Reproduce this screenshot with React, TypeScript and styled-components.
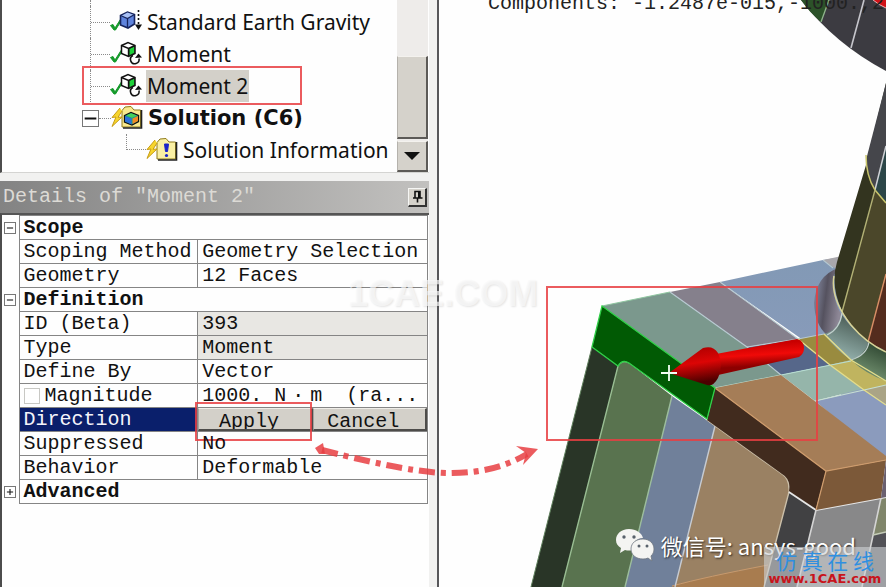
import React from "react";
import styled, { createGlobalStyle } from "styled-components";

const GlobalStyle = createGlobalStyle`
  * { box-sizing: border-box; }
  body { margin: 0; background: #fff; color: #111; }
  button, input { font: inherit; color: inherit; }
`;

const mono = `"Liberation Mono", "Noto Sans CJK SC", monospace`;
const markRed = "rgba(232, 62, 66, 0.85)";

const Shell = styled.main`
  position: relative;
  display: grid;
  grid-template-columns: minmax(0, 439fr) minmax(0, 447fr);
  min-height: 100vh;
  overflow: hidden;
`;

const SidePane = styled.section`
  display: flex;
  flex-direction: column;
  padding-right: 8px;
  background: #f1f1f0;
  border-right: 2px solid #57575a;
`;

const Outline = styled.div`
  display: flex;
  height: 173px;
  background: #fefefe;
  border-left: 2px solid #4c4c4c;
  border-bottom: 1px solid #d4d4d2;
`;

const Tree = styled.ul`
  flex: 1;
  min-width: 0;
  margin: 0;
  padding: 0;
  list-style: none;
  font: 21px/32px "Noto Sans", sans-serif;

  &::before {
    content: "";
    display: block;
    height: 6px;
    margin-left: 88px;
    border-left: 1px dotted #8a8a8a;
  }
`;

const TreeRow = styled.li<{ $indent: number }>`
  position: relative;
  display: flex;
  align-items: center;
  height: 32px;
  padding-left: ${(p) => p.$indent}px;
  white-space: nowrap;
`;

const Connector = styled.span<{ $last?: boolean }>`
  display: flex;
  align-items: center;
  align-self: flex-start;
  width: 20px;
  height: ${(p) => (p.$last ? "50%" : "100%")};
  border-left: 1px dotted #8a8a8a;
  border-bottom: ${(p) => (p.$last ? "1px dotted #8a8a8a" : "none")};

  &::after {
    content: "";
    flex: 1;
    border-top: ${(p) => (p.$last ? "none" : "1px dotted #8a8a8a")};
  }
`;

const ShortDots = styled.span`
  width: 12px;
  border-top: 1px dotted #8a8a8a;
`;

const Toggle = styled.button<{ $size: number }>`
  display: grid;
  place-items: center;
  flex: none;
  width: ${(p) => p.$size}px;
  height: ${(p) => p.$size}px;
  padding: 0;
  background: #fff;
  border: 1px solid #777;
`;

const NodeLabel = styled.button<{ $selected?: boolean; $bold?: boolean }>`
  height: 32px;
  margin-left: 4px;
  padding: 0 1px;
  border: 0;
  background: ${(p) => (p.$selected ? "#d3d0c9" : "transparent")};
  font-family: ${(p) => (p.$bold ? `"DejaVu Sans"` : `"Noto Sans"`)}, sans-serif;
  font-weight: ${(p) => (p.$bold ? 700 : 400)};
  line-height: 32px;
`;

const RowMark = styled.span`
  position: absolute;
  left: 80px;
  top: -4px;
  width: 220px;
  height: 39px;
  border: 2px solid ${markRed};
  pointer-events: none;
`;

const ScrollTrack = styled.div`
  display: flex;
  flex-direction: column;
  width: 31px;
  margin-right: 1px;
  background: #eeecea;
`;

const ScrollThumb = styled.div`
  height: 83px;
  margin-top: auto;
  background: #d5d2cb;
  border: solid;
  border-width: 1px 2px 2px 1px;
  border-color: #f4f2ee #5c5a57 #5c5a57 #b5b2ac;
`;

const ScrollButton = styled.button`
  display: grid;
  place-items: center;
  height: 31px;
  margin-top: 2px;
  padding: 0;
  background: #d5d2cb;
  border: solid;
  border-width: 1px 2px 2px 1px;
  border-color: #f4f2ee #5c5a57 #5c5a57 #b5b2ac;
`;

const TitleBar = styled.header`
  display: flex;
  align-items: center;
  justify-content: space-between;
  height: 32px;
  margin-top: 8px;
  padding: 0 2px 0 3px;
  background: linear-gradient(90deg, #838383, #c2c1bf);
  font: 20px/32px ${mono};
  color: #dcdad5;
`;

const Title = styled.h2`
  margin: 0;
  font: inherit;
  white-space: pre;
`;

const PinButton = styled.button`
  display: grid;
  place-items: center;
  width: 19px;
  height: 19px;
  padding: 0;
  background: #d5d2cb;
  border: solid;
  border-width: 1px 2px 2px 1px;
  border-color: #f6f6f4 #333 #333 #f6f6f4;
`;

const Details = styled.div`
  flex: 1;
  padding-right: 1px;
  background: #fefefe;
  border-left: 2px solid #4c4c4c;
  border-top: 2px solid #555;
`;

const Grid = styled.table`
  width: 100%;
  table-layout: fixed;
  border-collapse: collapse;
  font: 20px/23px ${mono};
`;

const Gutter = styled.td`
  padding: 0 0 0 2px;
`;

const GroupCell = styled.th`
  height: 24px;
  padding: 0 0 0 4px;
  border: 1px solid #858585;
  text-align: left;
  font-weight: 700;
`;

const NameCell = styled.th<{ $active?: boolean }>`
  height: 24px;
  padding: 0 0 0 4px;
  border: 1px solid #858585;
  background: ${(p) => (p.$active ? "#0a1f6b" : "transparent")};
  color: ${(p) => (p.$active ? "#f4f4fa" : "inherit")};
  text-align: left;
  font-weight: 400;
  white-space: nowrap;
`;

const ValueCell = styled.td<{ $readOnly?: boolean; $flush?: boolean }>`
  position: relative;
  padding: 0 0 0 ${(p) => (p.$flush ? 0 : 4)}px;
  border: 1px solid #858585;
  background: ${(p) => (p.$readOnly ? "#e8e7e3" : "transparent")};
  white-space: pre;
`;

const WideDot = styled.span`
  display: inline-block;
  width: 24px;
  text-align: center;
`;

const CheckLabel = styled.label`
  display: flex;
  align-items: center;
  gap: 5px;
`;

const Check = styled.input`
  appearance: none;
  width: 16px;
  height: 16px;
  margin: 0;
  background: #fff;
  border: 1px solid #c8c8c4;
`;

const ButtonPair = styled.div`
  display: grid;
  grid-template-columns: 1fr 1fr;
  height: 23px;
`;

const CellButton = styled.button`
  height: 23px;
  padding: 3px 12px 0 0;
  overflow: hidden;
  background: #d3d0c9;
  border: solid;
  border-width: 1px 2px 2px 1px;
  border-color: #efede8 #4d4c4a #4d4c4a #a5a39e;
  line-height: 20px;
`;

const ApplyMark = styled.span`
  position: absolute;
  left: -3px;
  top: -6px;
  width: 117px;
  height: 39px;
  border: 2px solid ${markRed};
  pointer-events: none;
`;

const Viewer = styled.section`
  position: relative;
  overflow: hidden;
  background: #fefefe;
`;

const Scene = styled.svg`
  position: absolute;
  inset: 0;
  width: 100%;
  height: 100%;
`;

const Readout = styled.p`
  position: absolute;
  left: 49px;
  top: -8px;
  margin: 0;
  font: 20px/24px ${mono};
  white-space: pre;
  color: #222;
`;

const LinkArrow = styled.svg`
  position: absolute;
  left: 310px;
  top: 436px;
  width: 240px;
  height: 50px;
  pointer-events: none;
`;

const CenterMark = styled.span`
  position: absolute;
  left: 348px;
  top: 274px;
  font: 700 36px/40px "Liberation Sans", sans-serif;
  color: rgba(250, 250, 250, 0.7);
  text-shadow: 1px 1px 2px rgba(0, 0, 0, 0.1);
  pointer-events: none;
`;

const Account = styled.div`
  position: absolute;
  right: 30px;
  bottom: 25px;
  display: flex;
  align-items: center;
  gap: 6px;
  font: 22px/34px "Noto Sans CJK SC", sans-serif;
  color: #fff;
  text-shadow: 1px 1px 2px rgba(0, 0, 0, 0.7);
  white-space: nowrap;
`;

const SiteBadge = styled.div`
  position: absolute;
  right: 0;
  bottom: 0;
  width: 122px;
  height: 40px;
  background: rgba(205, 208, 212, 0.62);
  text-align: center;
  white-space: nowrap;
`;

const SiteName = styled.div`
  font: 21px/26px "Noto Sans CJK SC", sans-serif;
  color: #2f8fe0;
`;

const SiteLink = styled.a`
  display: block;
  font: 700 13px/12px "DejaVu Sans", sans-serif;
  color: #c8141c;
  text-decoration: none;
`;

const Tick = () => (
  <path d="M0.5 19.5 3 18.5 5 22 11 12.5 12 13.5 5.5 24 4 24Z" fill="#159a2b" stroke="#159a2b" />
);

const GravityIcon = () => (
  <svg width="32" height="32" aria-hidden="true">
    <Tick />
    <path d="M10.5 9.5 17.5 6 24.5 8.5V18L18 22 10.5 19Z" fill="#5f84dd" stroke="#16245c" strokeWidth="1.6" />
    <path d="M11 10 17.5 12.5 24 9 17.5 6.5Z" fill="#a9c1f5" />
    <path d="M10.5 9.5 17.5 12.5 24.5 8.5M17.5 12.5V21.5" fill="none" stroke="#16245c" strokeWidth="1.3" />
    <path d="M28.5 4V19" stroke="#111" strokeWidth="1.6" strokeDasharray="2 2" />
    <path d="M25 18.5H32L28.5 24Z" fill="#111" />
  </svg>
);

const MomentIcon = () => (
  <svg width="32" height="32" aria-hidden="true">
    <Tick />
    <path d="M11.5 7.5 18 4.5 25 7.5V15.5L18.5 18.5 11.5 15.5Z" fill="#fff" stroke="#111" strokeWidth="1.5" />
    <path d="M19 10.5 24.5 8V15L19 17.8Z" fill="#1ed13a" stroke="#111" strokeWidth="0.8" />
    <path d="M11.5 7.5 18.5 10.5 25 7.5M18.5 10.5V18" fill="none" stroke="#111" strokeWidth="1.4" />
    <path d="M23 17.5A4.3 4.3 0 1 0 29 20.5" fill="none" stroke="#111" strokeWidth="1.6" />
    <path d="M25 20 28.5 15.5 32 19.5Z" fill="#111" />
  </svg>
);

const Bolt = () => (
  <path d="M9 6 1 15.5 5 15 1 24.5 11 15 7 15.3 11 9" fill="#f7d52c" stroke="#c79c14" strokeWidth="1" />
);

const SolutionIcon = () => (
  <svg width="32" height="32" aria-hidden="true">
    <path d="M11 8.5 14 5 20 4.5 23 8H29.5V25H11Z" fill="#f9e98e" stroke="#8f7a1a" />
    <path d="M30.5 8V26H12" fill="none" stroke="#222" strokeWidth="1.6" />
    <path d="M13.5 13.5 20 10.5 27.5 13.5V19.5L21 23 13.5 20Z" fill="#1f9a86" stroke="#111" strokeWidth="1.3" />
    <path d="M14 14 20.5 16.5V22.5L14 19.5Z" fill="#2b6fdc" />
    <path d="M21.5 16.5 27 14V19L21.5 22Z" fill="#f08a24" />
    <path d="M15 13.5 20 11.3 26 13.5 21 15.8Z" fill="#45d15a" />
    <Bolt />
  </svg>
);

const InfoIcon = () => (
  <svg width="32" height="32" aria-hidden="true">
    <path d="M11 8.5 14 5 20 4.5 23 8H29.5V25H11Z" fill="#faf0a4" stroke="#8f7a1a" />
    <path d="M30.5 8V26H12" fill="none" stroke="#222" strokeWidth="1.6" />
    <path d="M18.5 10H22.5L21.5 17.5H19.5Z" fill="#1a24c8" stroke="#1a24c8" />
    <circle cx="20.5" cy="21.5" r="1.6" fill="#1a24c8" />
    <Bolt />
  </svg>
);

const Sign = ({ size, plus }: { size: number; plus?: boolean }) => (
  <svg width={size} height={size} viewBox="0 0 9 9" aria-hidden="true">
    <path d={plus ? "M1 4.5H8M4.5 1V8" : "M1 4.5H8"} stroke="#111" strokeWidth="1.2" />
  </svg>
);

const Model = () => (
  <Scene viewBox="439 0 447 587" preserveAspectRatio="xMinYMin slice" role="img" aria-label="Bracket geometry with moment direction">
    <defs>
      <linearGradient id="fillet" x1="0" x2="1" y1="0" y2="0.3">
        <stop offset="0" stopColor="#8b91ab" />
        <stop offset="0.5" stopColor="#55525f" />
        <stop offset="1" stopColor="#8d8796" />
      </linearGradient>
      <linearGradient id="filletTeal" x1="0.7" y1="0" x2="0.3" y2="1">
        <stop offset="0" stopColor="#45564f" />
        <stop offset="1" stopColor="#9ab8b4" />
      </linearGradient>
      <linearGradient id="filletGreen" x1="0.7" y1="0" x2="0.3" y2="1">
        <stop offset="0" stopColor="#2d4530" />
        <stop offset="1" stopColor="#7f9f7c" />
      </linearGradient>
      <linearGradient id="shaft" x1="0" y1="0" x2="0.15" y2="1">
        <stop offset="0.2" stopColor="#c80000" />
        <stop offset="0.5" stopColor="#f00a08" />
        <stop offset="0.8" stopColor="#8c0000" />
      </linearGradient>
      <linearGradient id="head" x1="0" y1="0" x2="0.2" y2="1">
        <stop offset="0.1" stopColor="#b00000" />
        <stop offset="0.5" stopColor="#dc0505" />
        <stop offset="1" stopColor="#4c0000" />
      </linearGradient>
      <linearGradient id="topBlue" x1="0" y1="0" x2="0" y2="1">
        <stop offset="0" stopColor="#8299b5" />
        <stop offset="1" stopColor="#8f9dc0" />
      </linearGradient>
    </defs>

    {/* upper ring */}
    <path d="M801 0Q835 44 886 71V0Z" fill="#3c3b41" />
    <path d="M801 0Q810 13 821 22L829 0Z" fill="#2c5229" />
    <path d="M829 0 821 22" stroke="#8fb58c" strokeWidth="1.3" />
    <path d="M864 0 851 48" stroke="#c6c6cc" strokeWidth="1.6" />
    <path d="M873 0Q879 5 886 8V0Z" fill="#d01218" />
    <path d="M873 0Q879 5 886 8" fill="none" stroke="#e8b0b0" />

    {/* top plate */}
    <path d="M720 282 823 260 842 257 886 300V460L803 340Z" fill="url(#topBlue)" />
    <path d="M602 306 670 292 747 347 781 375 715 388Z" fill="#7b988d" />
    <path d="M670 292 720 282 798 339 747 347Z" fill="#85808c" />
    <path d="M747 347 798 339 830 365 781 375Z" fill="#56678a" />
    <path d="M798 339 824 334 851 360 830 365Z" fill="#998b3f" />
    <path d="M781 375 830 365 862 389 815 401Z" fill="#95b5aa" />
    <path d="M830 365 851 360 886 380V385L864 390Z" fill="#c0b45f" />
    <path d="M864 390 886 385V404Z" fill="#aaa486" />
    <path d="M815 401 864 390 886 404V460Z" fill="#8b9bbd" />
    <path d="M823 260 842 256V272L833 267Z" fill="#a9a7ac" />

    {/* fillet ring */}
    <path d="M838 268Q816 276 814 303Q815 325 827 335Q836 332 842 315Q833 303 833 277Z" fill="url(#fillet)" />
    <path d="M842 315Q852 330 869 342Q868 356 851 360Q836 350 824 334Q838 330 842 315Z" fill="url(#filletTeal)" />
    <path d="M869 342Q877 348 886 351V381Q866 374 851 360Q864 356 869 342Z" fill="url(#filletGreen)" />
    <path d="M827 335Q840 329 842 313M851 360Q867 355 869 342" fill="none" stroke="#c2d0ce" strokeWidth="1.3" />

    {/* column */}
    <path d="M886 83 866 165 837 262Q830 285 842 311Q855 333 886 351Z" fill="#33341f" />
    <path d="M875 190 842 311Q855 333 869 342L886 277V203Z" fill="#4b472a" />
    <path d="M886 277 868 342 886 351Z" fill="#542c1e" />
    <path d="M886 83 866 160Q868 180 875 190L886 203Z" fill="#45464b" />
    <path d="M886 148 875 190 886 203Z" fill="#2c4648" />
    <path d="M886 146 875 190" stroke="#cfd2d6" strokeWidth="1.5" />
    <path d="M866 155Q866 176 875 190L886 203" fill="none" stroke="#c9c56b" strokeWidth="1.5" />
    <path d="M875 190 842 312" stroke="#b3b276" strokeWidth="1.4" />
    <path d="M886 274 868 342" stroke="#d98e66" strokeWidth="1.4" />
    <path d="M834 276Q830 298 851 325Q866 343 886 352" fill="none" stroke="#d8d497" strokeWidth="1.5" />

    {/* plate edges */}
    <g fill="none" stroke="#b7c9d0" strokeWidth="1.1">
      <path d="M670 292 747 347 781 375" />
      <path d="M720 282 798 339" />
      <path d="M747 347 798 339 824 334" />
      <path d="M823 260 833 268" />
      <path d="M602 306 670 292" stroke="#8fc5a0" />
      <path d="M715 388 781 375 851 361" stroke="#b7ddd2" />
      <path d="M815 401 864 390 886 385" stroke="#c8e0d2" />
      <path d="M798 339 830 365 864 390 886 405" stroke="#e4dd8a" strokeWidth="1.4" />
      <path d="M824 334 851 360 886 381" stroke="#e4dd8a" strokeWidth="1.4" />
    </g>

    {/* front legs */}
    <path d="M592 347 618 366 562 587H531Z" fill="#293527" />
    <path d="M618 366Q622 359 629 363L672 396 625 587H562Z" fill="#59734f" />
    <path d="M672 396 715 426 675 587H625Z" fill="#70809a" />
    <path d="M715 426 782 474Q790 479 789 492L764 587H675Z" fill="#9a8163" />
    <path d="M671 587Q700 578 768 566L764 587Z" fill="#a87c4f" />
    <path d="M672 586Q705 577 768 565" fill="none" stroke="#c9996b" />
    <path d="M789 492 816 510 797 587H764Z" fill="#414143" />
    <path d="M816 510 881 498 862 587H797Z" fill="#888889" />
    <path d="M881 498 886 497V532L873 535Z" fill="#80866b" />
    <path d="M873 535 886 532V587H862Z" fill="#525257" />
    <g fill="none" strokeWidth="1.4">
      <path d="M592 347 531 587" stroke="#5f7f5c" strokeWidth="1" />
      <path d="M562 587 618 366Q622 359 629 363" stroke="#98bd92" />
      <path d="M672 396 625 587" stroke="#9cbd9c" />
      <path d="M715 426 675 587" stroke="#c6cbd2" />
      <path d="M707 420 782 474Q790 479 789 492L764 587" stroke="#cbbfa9" />
      <path d="M789 492 816 510 881 498 886 497" stroke="#e6e6e6" strokeWidth="2" />
      <path d="M816 510 797 587M881 498 862 587" stroke="#d4d4d4" strokeWidth="1.6" />
      <path d="M873 535 886 532" stroke="#c4ccb8" />
    </g>

    {/* brown block */}
    <path d="M715 388 781 375 886 456V460L826 471Z" fill="#a57d57" />
    <path d="M715 388 826 471 816 509 789 491Q791 479 782 474L707 420Z" fill="#412b1e" />
    <path d="M826 471 886 460 881 498 816 510Z" fill="#7c5939" />
    <path d="M886 460V497L881 498Z" fill="#6a6070" />
    <path d="M715 388 826 471 886 460M826 471 816 510" fill="none" stroke="#cf9c6c" strokeWidth="1.2" />

    {/* selected face */}
    <path d="M602 306 715 388 707 419 629 363Q622 359 618 366L592 347Z" fill="#015a04" stroke="#2fcf47" strokeWidth="1.3" />

    {/* direction arrow */}
    <path d="M716 354 797 339Q804 341 804 348 804 354 799 357L718 375Z" fill="url(#shaft)" />
    <path d="M669 373 703 348Q713 345 718 353 724 365 718 378 713 387 707 385Z" fill="url(#head)" />
    <path d="M661 373H677M669 365V381" stroke="#f3fff3" strokeWidth="1.8" />

    <rect x="547" y="287" width="270" height="153" fill="none" stroke={markRed} strokeWidth="2" />
  </Scene>
);

type Property = {
  name: string;
  value: React.ReactNode;
  readOnly?: boolean;
  kind?: "check" | "direction";
};
type Group = { title: string; closed?: boolean; items: Property[] };

const groups: Group[] = [
  {
    title: "Scope",
    items: [
      { name: "Scoping Method", value: "Geometry Selection" },
      { name: "Geometry", value: "12 Faces" },
    ],
  },
  {
    title: "Definition",
    items: [
      { name: "ID (Beta)", value: "393", readOnly: true },
      { name: "Type", value: "Moment", readOnly: true },
      { name: "Define By", value: "Vector" },
      {
        name: "Magnitude",
        value: (
          <>
            1000. N<WideDot>·</WideDot>m{"  "}(ra...
          </>
        ),
        kind: "check",
      },
      { name: "Direction", value: "", kind: "direction" },
      { name: "Suppressed", value: "No" },
      { name: "Behavior", value: "Deformable" },
    ],
  },
  { title: "Advanced", closed: true, items: [] },
];

const PropertyRow = ({ item }: { item: Property }) => (
  <tr>
    <Gutter />
    <NameCell scope="row" $active={item.kind === "direction"}>
      {item.kind === "check" ? (
        <CheckLabel>
          <Check type="checkbox" />
          {item.name}
        </CheckLabel>
      ) : (
        item.name
      )}
    </NameCell>
    {item.kind === "direction" ? (
      <ValueCell $flush>
        <ButtonPair>
          <CellButton type="button">Apply</CellButton>
          <CellButton type="button">Cancel</CellButton>
        </ButtonPair>
        <ApplyMark />
      </ValueCell>
    ) : (
      <ValueCell $readOnly={item.readOnly}>{item.value}</ValueCell>
    )}
  </tr>
);

export default function App() {
  return (
    <Shell>
      <GlobalStyle />
      <SidePane>
        <Outline>
          <Tree>
            <TreeRow $indent={88}>
              <Connector />
              <GravityIcon />
              <NodeLabel type="button">Standard Earth Gravity</NodeLabel>
            </TreeRow>
            <TreeRow $indent={88}>
              <Connector />
              <MomentIcon />
              <NodeLabel type="button">Moment</NodeLabel>
            </TreeRow>
            <TreeRow $indent={88}>
              <Connector />
              <MomentIcon />
              <NodeLabel type="button" $selected>Moment 2</NodeLabel>
              <RowMark />
            </TreeRow>
            <TreeRow $indent={80}>
              <Toggle type="button" $size={17} aria-label="Collapse Solution">
                <Sign size={15} />
              </Toggle>
              <ShortDots />
              <SolutionIcon />
              <NodeLabel type="button" $bold>Solution (C6)</NodeLabel>
            </TreeRow>
            <TreeRow $indent={124}>
              <Connector $last />
              <InfoIcon />
              <NodeLabel type="button">Solution Information</NodeLabel>
            </TreeRow>
          </Tree>
          <ScrollTrack>
            <ScrollThumb />
            <ScrollButton type="button" aria-label="Scroll down">
              <svg width="16" height="8" aria-hidden="true">
                <path d="M0 0H16L8 8Z" fill="#111" />
              </svg>
            </ScrollButton>
          </ScrollTrack>
        </Outline>

        <TitleBar>
          <Title>Details of "Moment 2"</Title>
          <PinButton type="button" aria-label="Pin panel">
            <svg width="13" height="13" aria-hidden="true">
              <path d="M4 1.5H9V8H4ZM2 8H11.5M6.5 8V12.5" fill="none" stroke="#111" strokeWidth="1.6" />
              <path d="M8 1V8" stroke="#111" strokeWidth="2" />
            </svg>
          </PinButton>
        </TitleBar>
        <Details>
          <Grid>
            <colgroup>
              <col width="17" />
              <col width="42%" />
              <col />
            </colgroup>
            {groups.map((group) => (
              <tbody key={group.title}>
                <tr>
                  <Gutter>
                    <Toggle type="button" $size={12} aria-label={`Toggle ${group.title}`}>
                      <Sign size={8} plus={group.closed} />
                    </Toggle>
                  </Gutter>
                  <GroupCell colSpan={2} scope="rowgroup">{group.title}</GroupCell>
                </tr>
                {group.items.map((item) => (
                  <PropertyRow key={item.name} item={item} />
                ))}
              </tbody>
            ))}
          </Grid>
        </Details>
      </SidePane>

      <Viewer>
        <Model />
        <Readout>Components: -1.2487e-015,-1000.,2</Readout>
        <Account>
          <svg width="40" height="34" aria-hidden="true">
            <path d="M14 1C6 1 1 6 1 12 1 16 3 18 6 20L5 25 10 22Q14 23 18 22C17 14 22 10 28 10 27 5 21 1 14 1Z" fill="#f4f4f2" />
            <path d="M28 11C21 11 16 15 16 21 16 27 21 31 28 31Q31 31 33 30L37 33 36 28C38 26 39 24 39 21 39 15 34 11 28 11Z" fill="#f4f4f2" stroke="#6f7680" strokeWidth="0.8" />
            <g fill="#59626c">
              <circle cx="9" cy="9" r="1.7" />
              <circle cx="19" cy="9" r="1.7" />
              <circle cx="24" cy="18" r="1.5" />
              <circle cx="32" cy="18" r="1.5" />
            </g>
          </svg>
          微信号: ansys-good
        </Account>
        <SiteBadge>
          <SiteName>仿 真 在 线</SiteName>
          <SiteLink href="#home">www.1CAE.com</SiteLink>
        </SiteBadge>
      </Viewer>

      <CenterMark>1CAE.COM</CenterMark>
      <LinkArrow viewBox="310 436 240 50" aria-hidden="true">
        <path d="M322 450Q415 474 452 473 495 473 527 454" fill="none" stroke={markRed} strokeWidth="6" strokeDasharray="16 6 5 6" />
        <path d="M315 448 323 443 325 454 319 454Z" fill={markRed} />
        <path d="M538 449 516 446 526 453 523 465Z" fill={markRed} />
      </LinkArrow>
    </Shell>
  );
}
